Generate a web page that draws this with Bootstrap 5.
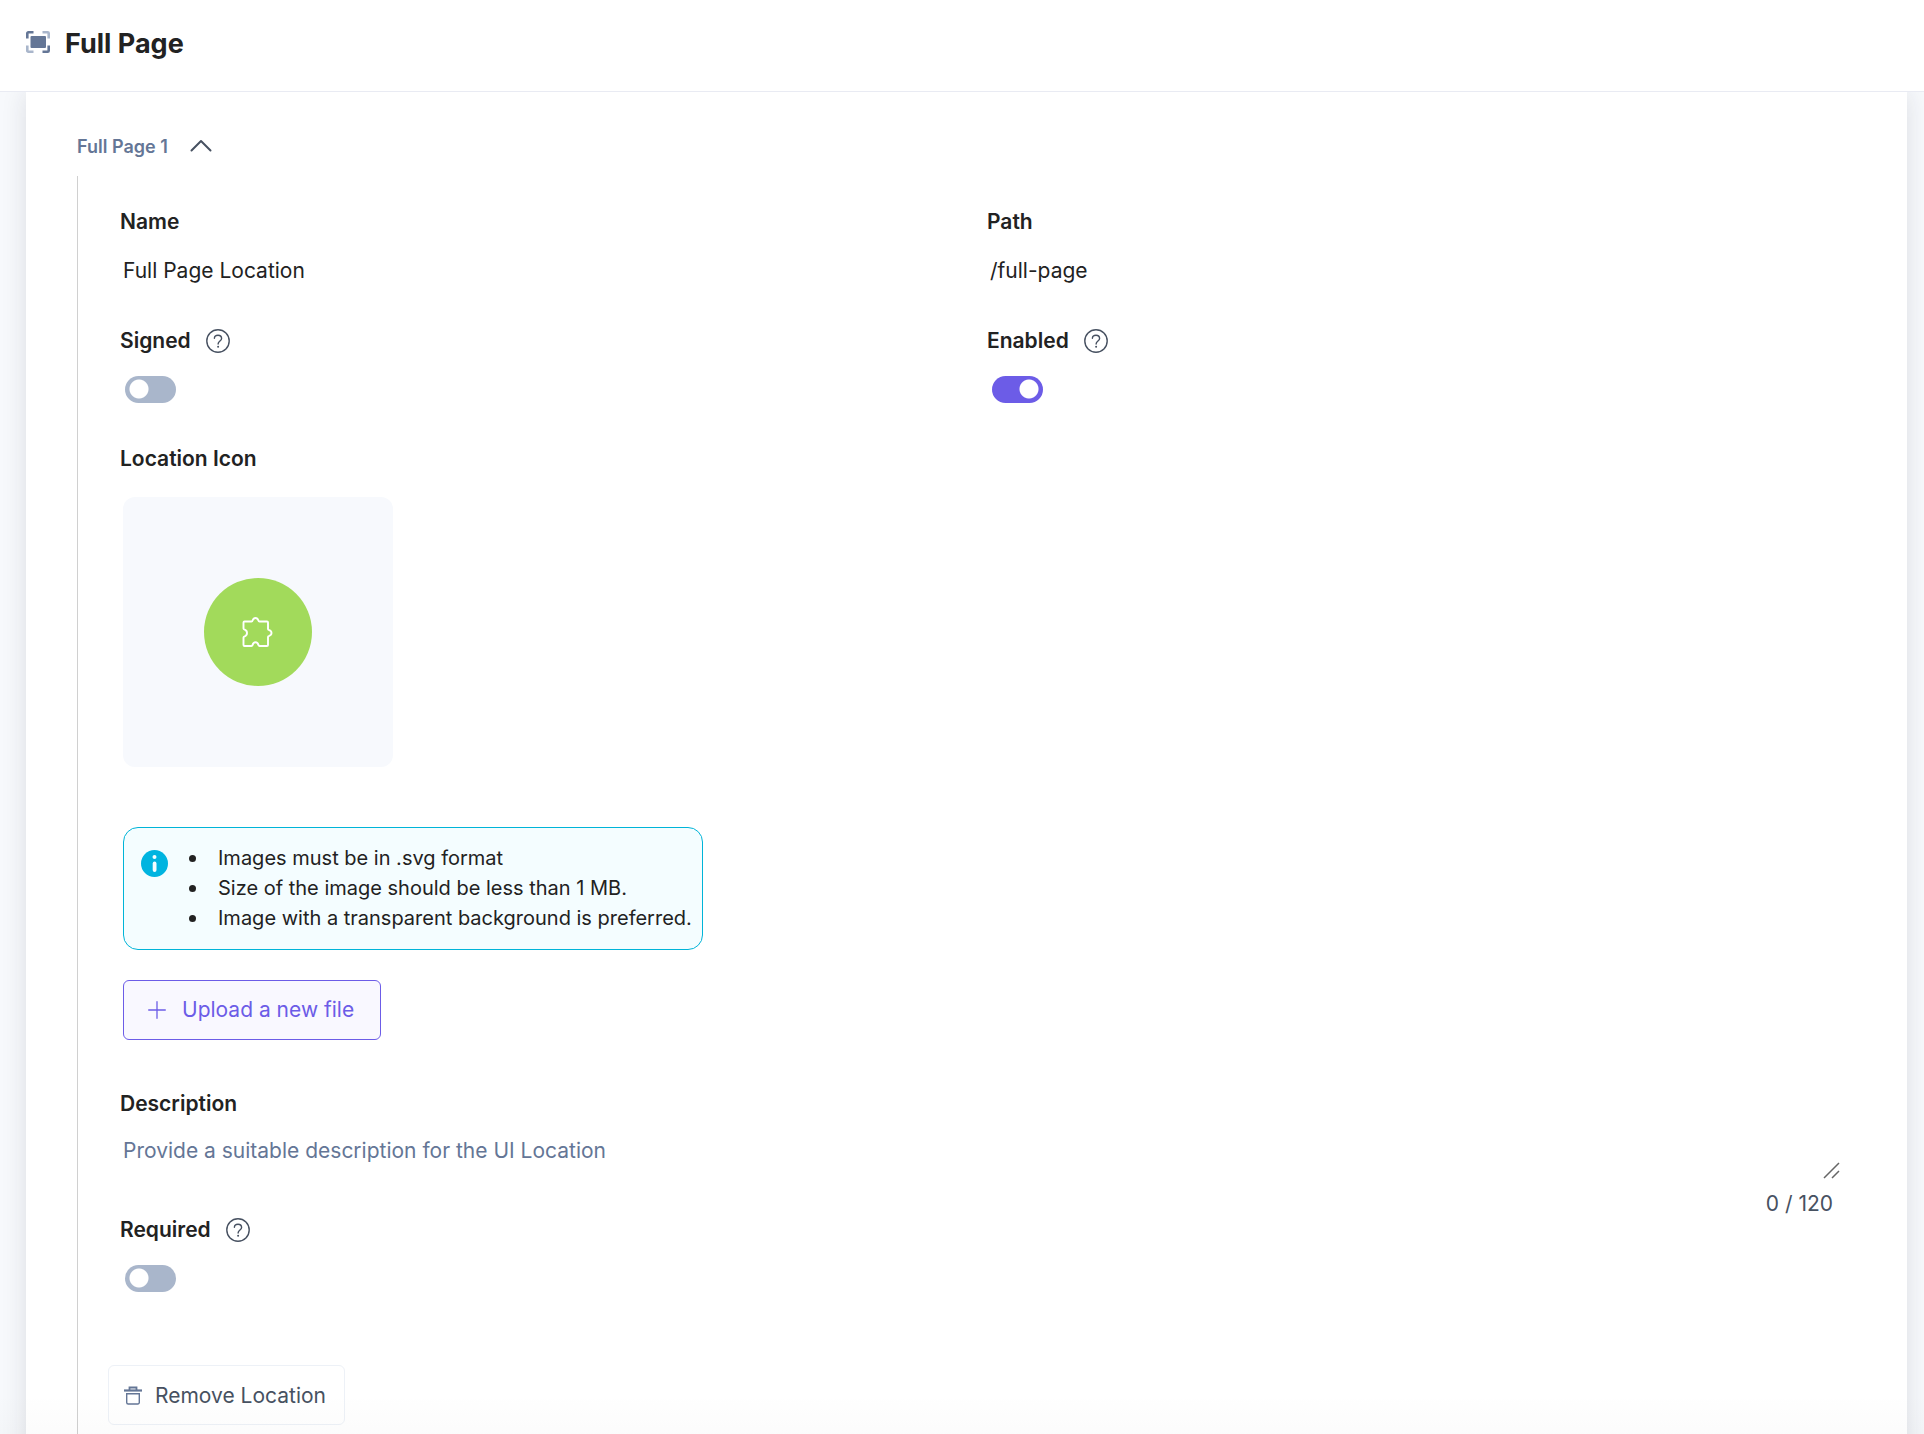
<!DOCTYPE html>
<html lang="en">
<head>
<meta charset="utf-8">
<meta name="viewport" content="width=device-width, initial-scale=1">
<title>Full Page</title>
<link href="https://cdn.jsdelivr.net/npm/bootstrap@5.3.0/dist/css/bootstrap.min.css" rel="stylesheet">
<style>
  body { font-family: Inter, "Liberation Sans", sans-serif; font-size: 21px; line-height: 24px; color: #222; background: #f7f9fc; }
  .top-bar { height: 92px; padding: 0 26px 4px; gap: 15px; border-bottom: 1px solid #e9ebf3; z-index: 2; }
  .top-bar svg { margin-bottom: 4px; }
  .page-title { font-size: 27px; line-height: 36px; font-weight: 700; }
  .viewport { padding: 0 17px 0 26px; }
  .viewport::after { content: ""; position: absolute; left: 0; right: 0; bottom: 0; height: 40px; background: linear-gradient(transparent, rgba(34, 34, 34, .015)); pointer-events: none; }
  .panel { min-height: 100%; padding: 41px 51px 60px; background: #fff; box-shadow: 0 0 24px rgba(34, 34, 50, .12); }
  .group-toggle { gap: 22px; font-size: 18px; font-weight: 600; color: #647696; }
  .group-toggle svg { margin-bottom: 2px; }
  .tree { margin-top: 16px; padding: 34px 2px 60px 42px; border-left: 1px solid #d0d0d0; }
  .field-label { font-size: 21px; line-height: 24px; font-weight: 600; }
  .label-line { gap: 15px; height: 24px; }
  .flat-input { height: 42px; margin-top: 15px; padding: 0 3px; font-size: 21px; color: #222; border: 0; background: transparent; }
  .flat-area { height: 54px; margin-top: 14px; padding: 9px 3px; font-size: 21px; line-height: 24px; border: 0; background: transparent; resize: none; }
  .flat-area::placeholder { color: #647696; opacity: 1; }
  .second-line { margin-top: 38px; }
  .form-check-input.toggle { width: 51px; height: 27px; margin: 23px 0 0 5px; float: none; display: block; border: 0; border-radius: 14px; background: radial-gradient(circle at 14px 13px, #fff 9px, transparent 10px) #a9b6cb; }
  .form-check-input.toggle:checked { background: radial-gradient(circle at 37px 13px, #fff 9px, transparent 10px) #6c5ce7; }
  .icon-line { margin-top: 44px; }
  .media { margin-left: 3px; }
  .preview { width: 270px; height: 270px; margin-top: 26px; border-radius: 12px; background: #f7f9fd; }
  .avatar { width: 108px; height: 108px; padding-right: 2px; background: #a2da5b; }
  .note { margin-top: 60px; padding: 15px 10px 16px 17px; gap: 21px; font-size: 20px; line-height: 30px; background: #f4fdff; border: 1px solid #00b4d8; border-radius: 15px; }
  .note li { display: flex; align-items: center; gap: 22px; }
  .note li::before { content: ""; width: 7px; height: 7px; border-radius: 50%; background: #222; }
  .note svg { margin-top: 7px; }
  .upload { height: 60px; margin-top: 30px; padding: 0 26px 0 24px; gap: 16px; font-size: 21px; color: #6c5ce7; background: #f9f8ff; border: 1px solid #6c5ce7; border-radius: 6px; }
  .desc { margin-top: 52px; }
  .grip { position: absolute; right: 14px; bottom: 5px; }
  .counter { margin-top: 8px; padding-right: 21px; color: #475161; }
  .required-line { margin-top: 2px; }
  .remove { height: 60px; margin: 73px 0 0 -12px; padding: 1px 18px 0 15px; gap: 13px; font-size: 21px; color: #475161; background: #fff; border: 1px solid #edf1f7; border-radius: 6px; }
</style>
<script src="https://cdn.jsdelivr.net/npm/bootstrap@5.3.0/dist/js/bootstrap.bundle.min.js"></script>
</head>
<body class="vh-100 d-flex flex-column overflow-hidden">
<svg class="d-none" aria-hidden="true">
  <symbol id="help" viewBox="0 0 24 24"><g fill="none" stroke="#475161" stroke-width="1.4"><circle cx="12" cy="12" r="11.2"/><path d="M8.4 9.3C8.5 7.2 10 6.2 12 6.2s3.6 1.2 3.6 3.2c0 2.6-3.5 2.6-3.5 5.6" stroke-linecap="round"/></g><circle cx="12.1" cy="17.8" r="1" fill="#475161"/></symbol>
</svg>
<header class="top-bar d-flex align-items-center bg-white flex-shrink-0 position-relative">
  <svg width="24" height="22" viewBox="0 0 24 22" fill="none" stroke-width="2.6" aria-hidden="true"><rect x="4.500" y="5" width="15.500" height="12" rx="1" fill="#647696"/><path d="M1.300 7.500V2.300a1 1 0 0 1 1-1H7.500M22.700 14.500v5.200a1 1 0 0 1-1 1H16.500" stroke="#647696"/><path d="M16.500 1.300h5.200a1 1 0 0 1 1 1V7.500M7.500 20.700H2.300a1 1 0 0 1-1-1V14.500" stroke="#a9b6cb"/></svg>
  <h1 class="page-title m-0">Full Page</h1>
</header>
<main class="viewport flex-grow-1 overflow-hidden position-relative">
  <form class="panel">
    <button type="button" class="group-toggle btn border-0 p-0 d-flex align-items-center" aria-expanded="true">
      <span>Full Page 1</span>
      <svg width="22" height="14" viewBox="0 0 22 14" fill="none" stroke="#475161" stroke-width="2" stroke-linecap="round" stroke-linejoin="round" aria-hidden="true"><path d="M1.500 11.500 11 2l9.500 9.500"/></svg>
    </button>
    <section class="tree">
      <div class="row g-0">
        <div class="col-6">
          <label class="field-label d-block" for="name">Name</label>
          <input id="name" class="flat-input form-control" value="Full Page Location">
        </div>
        <div class="col-6">
          <label class="field-label d-block" for="path">Path</label>
          <input id="path" class="flat-input form-control" value="/full-page">
        </div>
      </div>
      <div class="row g-0 second-line">
        <div class="col-6">
          <div class="label-line d-flex align-items-center"><label class="field-label" for="signed">Signed</label><svg width="24" height="24" aria-hidden="true"><use href="#help"/></svg></div>
          <input id="signed" class="form-check-input toggle" type="checkbox" role="switch">
        </div>
        <div class="col-6">
          <div class="label-line d-flex align-items-center"><label class="field-label" for="enabled">Enabled</label><svg width="24" height="24" aria-hidden="true"><use href="#help"/></svg></div>
          <input id="enabled" class="form-check-input toggle" type="checkbox" role="switch" checked>
        </div>
      </div>
      <div class="icon-line">
        <h2 class="field-label m-0">Location Icon</h2>
        <div class="media d-flex flex-column align-items-start">
          <div class="preview d-flex align-items-center justify-content-center">
            <div class="avatar rounded-circle d-flex align-items-center justify-content-center">
              <svg width="32" height="32" viewBox="0 0 32 32" fill="none" stroke="#fff" stroke-width="1.9" stroke-linejoin="round" aria-hidden="true"><path d="M2.500 6.500a1 1 0 0 1 1-1H10.500C11.300 5.500 11.500 5 11.700 4.300C12.300 2.500 13.300 2 14.500 2S16.700 2.500 17.300 4.300C17.500 5 17.700 5.500 18.500 5.500H26a1 1 0 0 1 1 1V13C27 13.800 27.500 14 28.200 14.200C29.800 14.700 30.500 15.700 30.500 17S29.800 19.300 28.200 19.800C27.500 20 27 20.200 27 21V29a1 1 0 0 1-1 1H18.500C17.900 30 17.700 29.700 17.500 29.200C17 27.200 16 26.300 14.500 26.300S12 27.200 11.500 29.200C11.300 29.700 11.100 30 10.500 30H3.500a1 1 0 0 1-1-1V21.500C2.500 20.700 3 20.500 3.700 20.300C5.300 19.700 6 18.500 6 17S5.300 14.300 3.700 13.700C3 13.500 2.500 13.300 2.500 12.500Z"/></svg>
            </div>
          </div>
          <div class="note d-flex align-items-start">
            <svg width="27" height="27" viewBox="0 0 27 27" aria-hidden="true"><circle cx="13.500" cy="13.500" r="13.500" fill="#00b4e0"/><circle cx="13.500" cy="7" r="2" fill="#f4fdff"/><rect x="11.700" y="11.500" width="3.800" height="10.500" rx="1.900" fill="#f4fdff"/></svg>
            <ul class="list-unstyled mb-0">
              <li>Images must be in .svg format</li>
              <li>Size of the image should be less than 1 MB.</li>
              <li>Image with a transparent background is preferred.</li>
            </ul>
          </div>
          <button type="button" class="upload btn d-flex align-items-center">
            <svg width="18" height="18" viewBox="0 0 18 18" stroke="#6c5ce7" stroke-width="1.300" stroke-linecap="round" aria-hidden="true"><path d="M9 .7v16.600M.7 9h16.600"/></svg>
            <span>Upload a new file</span>
          </button>
        </div>
      </div>
      <div class="desc">
        <label class="field-label d-block" for="description">Description</label>
        <div class="position-relative">
          <textarea id="description" class="flat-area form-control" placeholder="Provide a suitable description for the UI Location"></textarea>
          <svg class="grip" width="17" height="17" viewBox="0 0 17 17" stroke="#666" stroke-width="1.500" aria-hidden="true"><path d="M1 16 16 1M9 16l7-7"/></svg>
        </div>
        <div class="counter text-end">0 / 120</div>
      </div>
      <div class="required-line">
        <div class="label-line d-flex align-items-center"><label class="field-label" for="required">Required</label><svg width="24" height="24" aria-hidden="true"><use href="#help"/></svg></div>
        <input id="required" class="form-check-input toggle" type="checkbox" role="switch">
      </div>
      <button type="button" class="remove btn d-flex align-items-center">
        <svg width="18" height="19" viewBox="0 0 18 19" fill="none" stroke="#647696" aria-hidden="true"><path d="M0 4.500h18" stroke-width="2.200"/><path d="M5.500 4V1.500h7V4" stroke-width="1.800"/><path d="M2.700 7.700h12.600V16.500a1.500 1.500 0 0 1-1.500 1.500H4.200a1.500 1.500 0 0 1-1.500-1.500Z" stroke-width="1.400"/></svg>
        <span>Remove Location</span>
      </button>
    </section>
  </form>
</main>
</body>
</html>
